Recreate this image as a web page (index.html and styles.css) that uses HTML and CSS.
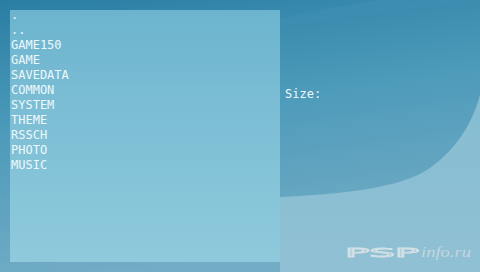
FILE: index.html
```html
<!DOCTYPE html>
<html>
<head>
<meta charset="utf-8">
<link rel="stylesheet" href="styles.css">
</head>
<body>
<div class="screen">
  <svg class="wave" width="480" height="272" viewBox="0 0 480 272">
    <defs>
      <linearGradient id="bg" x1="0" y1="0" x2="0.25" y2="1">
        <stop offset="0" stop-color="#2a7ea3"/>
        <stop offset="0.45" stop-color="#4c9aba"/>
        <stop offset="1" stop-color="#72acc5"/>
      </linearGradient>
      <linearGradient id="sw" x1="0" y1="0" x2="0" y2="1">
        <stop offset="0" stop-color="#86bdd2"/>
        <stop offset="1" stop-color="#90c0d3"/>
      </linearGradient>
    </defs>
    <rect width="480" height="272" fill="url(#bg)"/>
    <path d="M240 30 C290 15 330 8 380 0 L480 0 L480 2 C400 8 320 20 240 32 Z" fill="#3f8fb2" opacity="0.6"/>
    <path d="M280 197 C340 194 400 189 430 168 C455 150 472 125 480 95 L480 272 L280 272 Z" fill="url(#sw)"/>
  </svg>
  <div class="panel">
    <ul class="files">
      <li>.</li>
      <li>..</li>
      <li>GAME150</li>
      <li>GAME</li>
      <li>SAVEDATA</li>
      <li>COMMON</li>
      <li>SYSTEM</li>
      <li>THEME</li>
      <li>RSSCH</li>
      <li>PHOTO</li>
      <li>MUSIC</li>
    </ul>
  </div>
  <div class="info">
    <div class="size">Size:</div>
  </div>
  <svg class="logo" width="130" height="20" viewBox="0 0 130 20">
    <text class="psp" x="1" y="17" textLength="74" lengthAdjust="spacingAndGlyphs">PSP</text>
    <text class="ru" x="77" y="17" textLength="50" lengthAdjust="spacingAndGlyphs">info.ru</text>
  </svg>
</div>
</body>
</html>
```
FILE: styles.css
```css
* { box-sizing: border-box; }
html, body { margin: 0; padding: 0; }
body { width: 480px; height: 272px; overflow: hidden; background: #2a7ea3; }
.screen {
  position: relative;
  width: 480px;
  height: 272px;
  display: flex;
  padding: 10px 0 10px 10px;
  font-family: "DejaVu Sans Mono", monospace;
  font-size: 12px;
  color: #eef8fc;
}
.wave { position: absolute; left: 0; top: 0; z-index: 0; }
.panel {
  position: relative;
  z-index: 1;
  width: 270px;
  height: 252px;
  background: linear-gradient(180deg, #6cb4ce 0%, #7fc0d6 50%, #8fcadc 100%);
}
.files { list-style: none; margin: -2px 0 0 0; padding: 0 0 0 1px; }
.files li { height: 15px; line-height: 15px; white-space: pre; }
.info { position: relative; z-index: 1; padding: 77px 0 0 5px; }
.size { line-height: 15px; }
.logo {
  position: absolute;
  z-index: 1;
  left: 344px;
  top: 240px;
}
.psp {
  font-family: "DejaVu Sans", sans-serif;
  font-size: 12.5px;
  font-weight: normal;
  fill: #9cc3d3;
  stroke: #d3e1e7;
  stroke-width: 0.9px;
}
.ru {
  font-family: "Liberation Serif", serif;
  font-style: italic;
  font-size: 14px;
  fill: #c4d7df;
}
```
